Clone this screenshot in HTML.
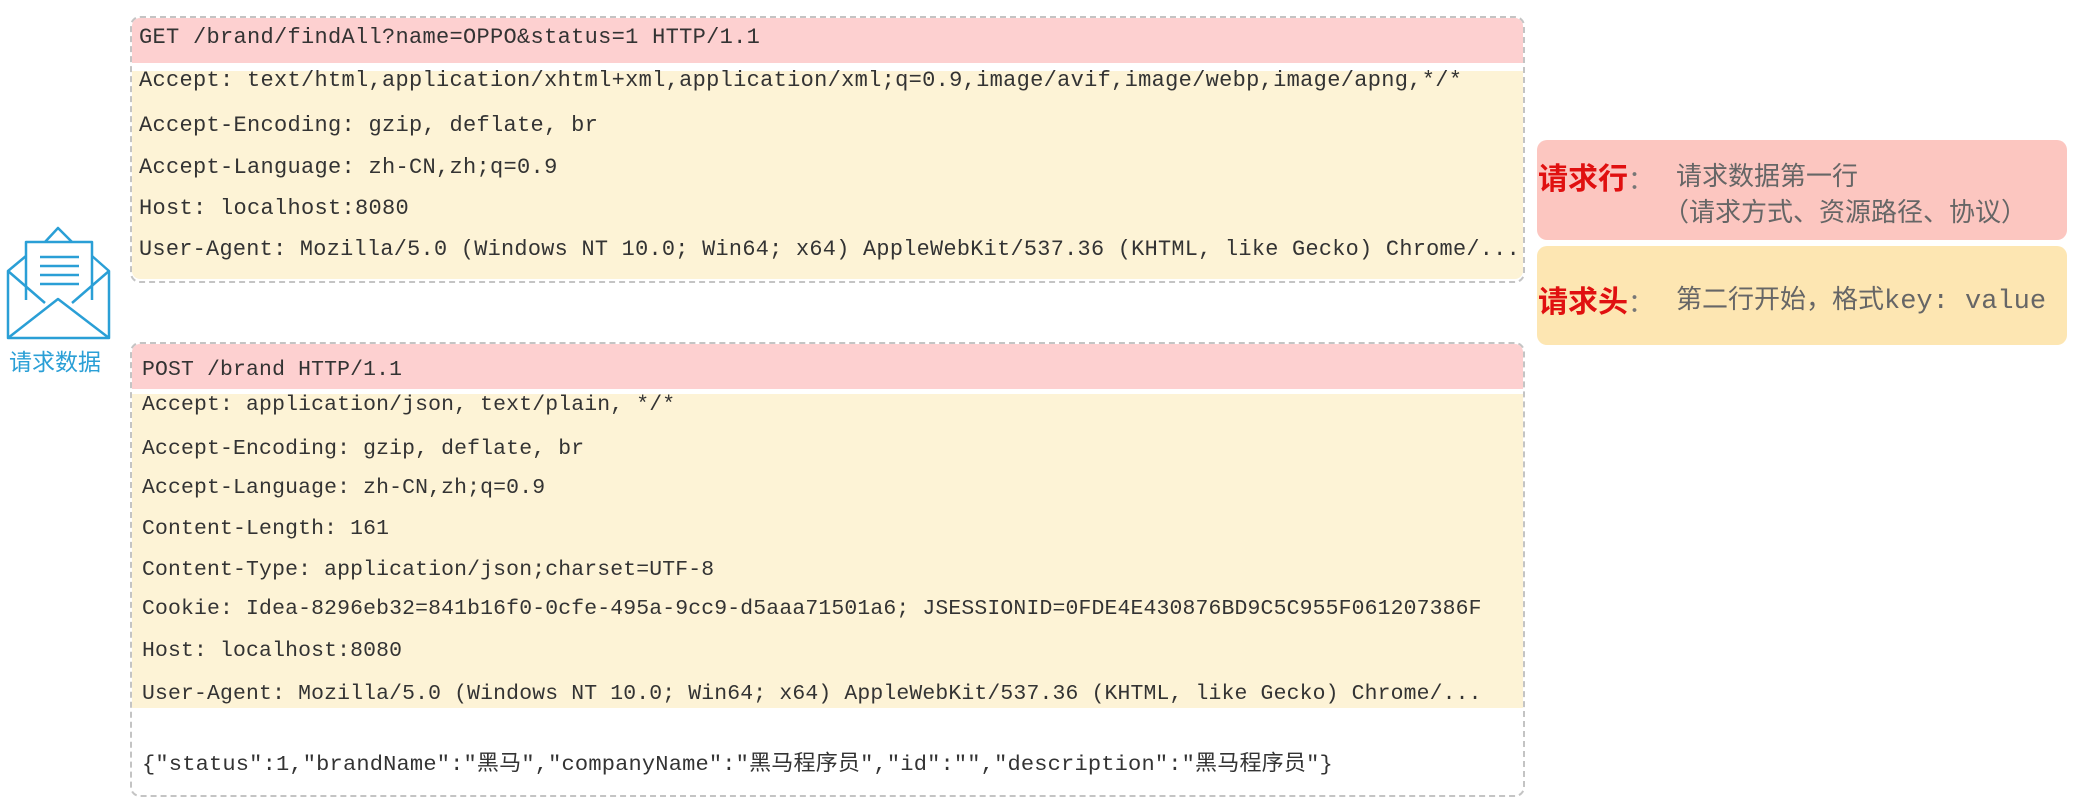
<!DOCTYPE html>
<html><head><meta charset="utf-8"><style>
body{margin:0;width:2078px;height:809px;background:#fff;position:relative;overflow:hidden;font-family:"Liberation Mono","Noto Sans CJK SC",monospace;}
.box{position:absolute;left:130px;width:1391px;border:2px dashed #c4c4c4;border-radius:10px;}
.band{position:absolute;left:0;right:0;}
.pink{background:#fdd0d0;border-radius:8px 8px 0 0;}
.yel{background:#fdf3d6;}
.t{position:absolute;font-size:22px;color:#333;white-space:nowrap;letter-spacing:0.3px;line-height:26px;transform-origin:0 50%;}
.b2{font-size:21.4px;letter-spacing:0.17px;}
.r{position:absolute;border-radius:10px;}
.lab{position:absolute;font-family:"Liberation Sans","Noto Sans CJK SC",sans-serif;white-space:nowrap;}
</style></head><body>
<div class="box" style="top:16px;height:263px;">
 <div class="band pink" style="top:0;height:45px;"></div>
 <div class="band yel" style="top:53px;height:208px;border-radius:0 0 8px 8px;"></div>
</div>
<div class="t" style="left:139px;top:25px;">GET /brand/findAll?name=OPPO&amp;status=1 HTTP/1.1</div>
<div class="t" style="left:139px;top:68px;">Accept: text/html,application/xhtml+xml,application/xml;q=0.9,image/avif,image/webp,image/apng,*/*</div>
<div class="t" style="left:139px;top:113px;">Accept-Encoding: gzip, deflate, br</div>
<div class="t" style="left:139px;top:155px;">Accept-Language: zh-CN,zh;q=0.9</div>
<div class="t" style="left:139px;top:196px;">Host: localhost:8080</div>
<div class="t" style="left:139px;top:237px;transform:scaleX(0.993);">User-Agent: Mozilla/5.0 (Windows NT 10.0; Win64; x64) AppleWebKit/537.36 (KHTML, like Gecko) Chrome/...</div>

<div class="box" style="top:342px;height:451px;">
 <div class="band pink" style="top:0;height:45px;"></div>
 <div class="band yel" style="top:50px;height:314px;"></div>
</div>
<div class="t b2" style="left:142px;top:357px;">POST /brand HTTP/1.1</div>
<div class="t b2" style="left:142px;top:392px;">Accept: application/json, text/plain, */*</div>
<div class="t b2" style="left:142px;top:436px;">Accept-Encoding: gzip, deflate, br</div>
<div class="t b2" style="left:142px;top:475px;">Accept-Language: zh-CN,zh;q=0.9</div>
<div class="t b2" style="left:142px;top:516px;">Content-Length: 161</div>
<div class="t b2" style="left:142px;top:557px;">Content-Type: application/json;charset=UTF-8</div>
<div class="t b2" style="left:142px;top:596px;">Cookie: Idea-8296eb32=841b16f0-0cfe-495a-9cc9-d5aaa71501a6; JSESSIONID=0FDE4E430876BD9C5C955F061207386F</div>
<div class="t b2" style="left:142px;top:638px;">Host: localhost:8080</div>
<div class="t b2" style="left:142px;top:681px;">User-Agent: Mozilla/5.0 (Windows NT 10.0; Win64; x64) AppleWebKit/537.36 (KHTML, like Gecko) Chrome/...</div>
<div class="t b2" style="left:142px;top:752px;transform:scaleX(1.03);">{"status":1,"brandName":"黑马","companyName":"黑马程序员","id":"","description":"黑马程序员"}</div>

<svg style="position:absolute;left:0;top:215px" width="120" height="130" viewBox="0 215 120 130" fill="none" stroke="#2a9fd6" stroke-width="2.5" stroke-linejoin="round">
 <path d="M45 242 L58 228 L72 242"/>
 <path d="M26 300 V242 H92 V300"/>
 <path d="M40 257 H79 M40 266 H79 M40 275 H79 M40 284 H79"/>
 <path d="M26 256 L8 271 V338 H109 V271 L92 256"/>
 <path d="M8 271 L45 303 M109 271 L72 303"/>
 <path d="M8 338 L58 299 L109 338"/>
</svg>
<div class="lab" style="left:9px;top:343px;font-size:23px;color:#2a9fd6;">请求数据</div>

<div class="r" style="left:1537px;top:140px;width:530px;height:100px;background:#fcc6c0;"></div>
<div class="r" style="left:1537px;top:246px;width:530px;height:99px;background:#fde6b2;"></div>
<div class="lab" style="left:1538px;top:154px;font-size:30px;color:#e01010;font-weight:bold;">请求行<span style="color:#777;font-weight:normal;font-size:26px;">：</span></div>
<div class="lab" style="left:1676px;top:156px;font-size:26px;color:#666;">请求数据第一行</div>
<div class="lab" style="left:1663px;top:192px;font-size:26px;color:#666;">（请求方式、资源路径、协议）</div>
<div class="lab" style="left:1538px;top:277px;font-size:30px;color:#e01010;font-weight:bold;">请求头<span style="color:#777;font-weight:normal;font-size:26px;">：</span></div>
<div class="lab" style="left:1676px;top:279px;font-size:26px;color:#666;">第二行开始，格式<span style="font-family:'Liberation Mono',monospace;font-size:27px;">key: value</span></div>
</body></html>
